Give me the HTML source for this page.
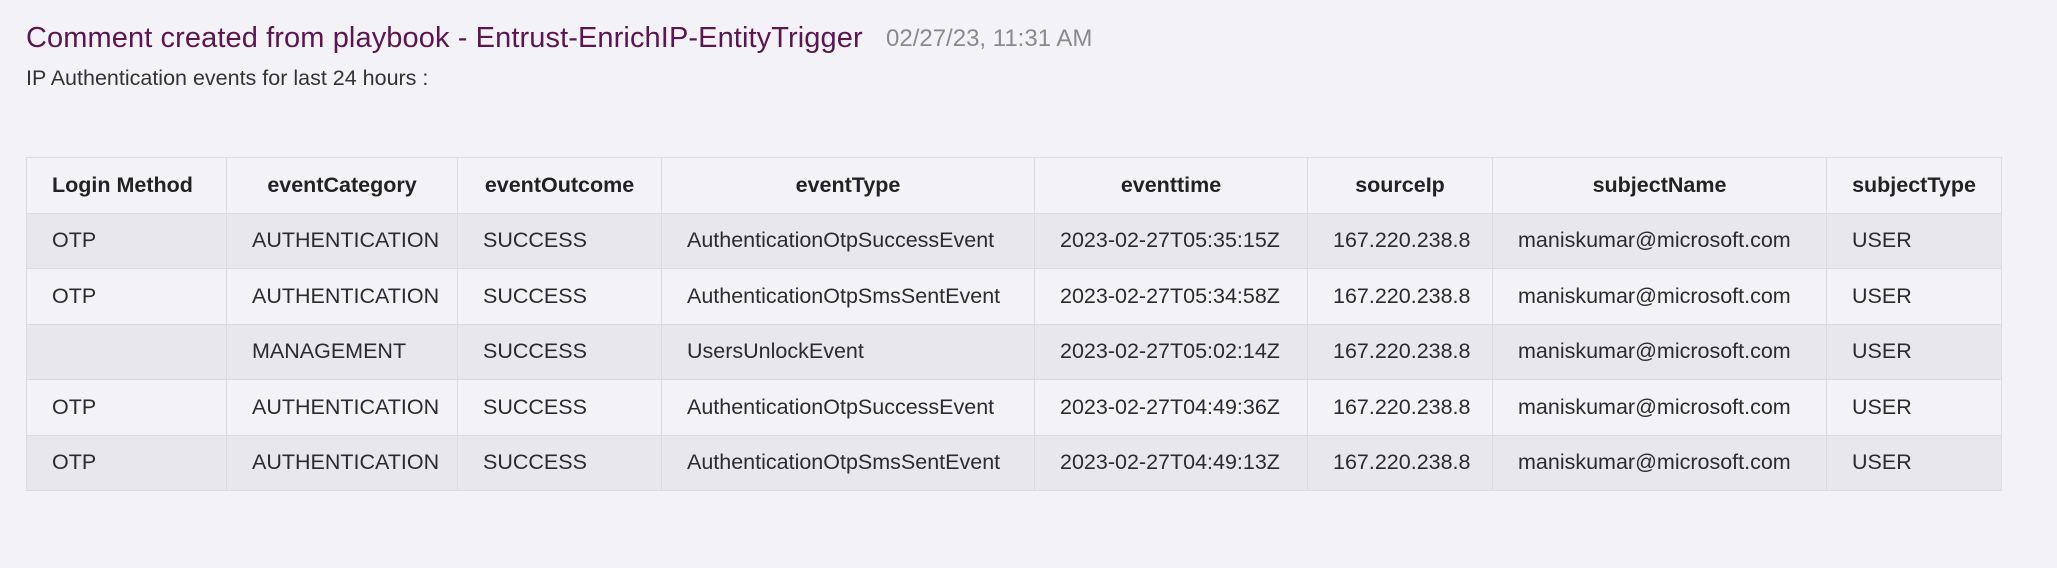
<!DOCTYPE html>
<html><head><meta charset="utf-8"><style>
html,body{margin:0;padding:0;background:#f3f2f7;width:2057px;height:568px;overflow:hidden;font-family:"Segoe UI","Liberation Sans",sans-serif;}
.title{position:absolute;left:26px;top:22px;font-size:29px;color:#5c1551;white-space:nowrap;letter-spacing:0.1px;}
.date{position:absolute;left:886px;top:25px;font-size:24px;color:#8a8a8a;white-space:nowrap;}
.sub{position:absolute;left:26px;top:66px;font-size:21.5px;color:#333;white-space:nowrap;}
table{position:absolute;left:26px;top:157px;border-collapse:collapse;table-layout:fixed;width:1975px;font-size:21.5px;color:#2b2b2b;}
td,th{border:1px solid #dcdbe0;height:54.5px;padding:0 0 0 25px;white-space:nowrap;overflow:hidden;}
th{text-align:center;padding:0;font-weight:bold;color:#222;background:#f3f2f7;}
th:first-child{text-align:left;padding-left:25px;}
tr:nth-child(even) td{background:#e8e7ec;}
tr:nth-child(odd) td{background:#f3f2f7;}
</style></head><body>
<div class="title">Comment created from playbook - Entrust-EnrichIP-EntityTrigger</div>
<div class="date">02/27/23, 11:31 AM</div>
<div class="sub">IP Authentication events for last 24 hours :</div>
<table>
<colgroup><col style="width:200px"><col style="width:231px"><col style="width:204px"><col style="width:373px"><col style="width:273px"><col style="width:185px"><col style="width:334px"><col style="width:175px"></colgroup>
<tr><th>Login Method</th><th>eventCategory</th><th>eventOutcome</th><th>eventType</th><th>eventtime</th><th>sourceIp</th><th>subjectName</th><th>subjectType</th></tr>
<tr><td>OTP</td><td>AUTHENTICATION</td><td>SUCCESS</td><td>AuthenticationOtpSuccessEvent</td><td>2023-02-27T05:35:15Z</td><td>167.220.238.8</td><td>maniskumar@microsoft.com</td><td>USER</td></tr>
<tr><td>OTP</td><td>AUTHENTICATION</td><td>SUCCESS</td><td>AuthenticationOtpSmsSentEvent</td><td>2023-02-27T05:34:58Z</td><td>167.220.238.8</td><td>maniskumar@microsoft.com</td><td>USER</td></tr>
<tr><td></td><td>MANAGEMENT</td><td>SUCCESS</td><td>UsersUnlockEvent</td><td>2023-02-27T05:02:14Z</td><td>167.220.238.8</td><td>maniskumar@microsoft.com</td><td>USER</td></tr>
<tr><td>OTP</td><td>AUTHENTICATION</td><td>SUCCESS</td><td>AuthenticationOtpSuccessEvent</td><td>2023-02-27T04:49:36Z</td><td>167.220.238.8</td><td>maniskumar@microsoft.com</td><td>USER</td></tr>
<tr><td>OTP</td><td>AUTHENTICATION</td><td>SUCCESS</td><td>AuthenticationOtpSmsSentEvent</td><td>2023-02-27T04:49:13Z</td><td>167.220.238.8</td><td>maniskumar@microsoft.com</td><td>USER</td></tr>
</table>
</body></html>
